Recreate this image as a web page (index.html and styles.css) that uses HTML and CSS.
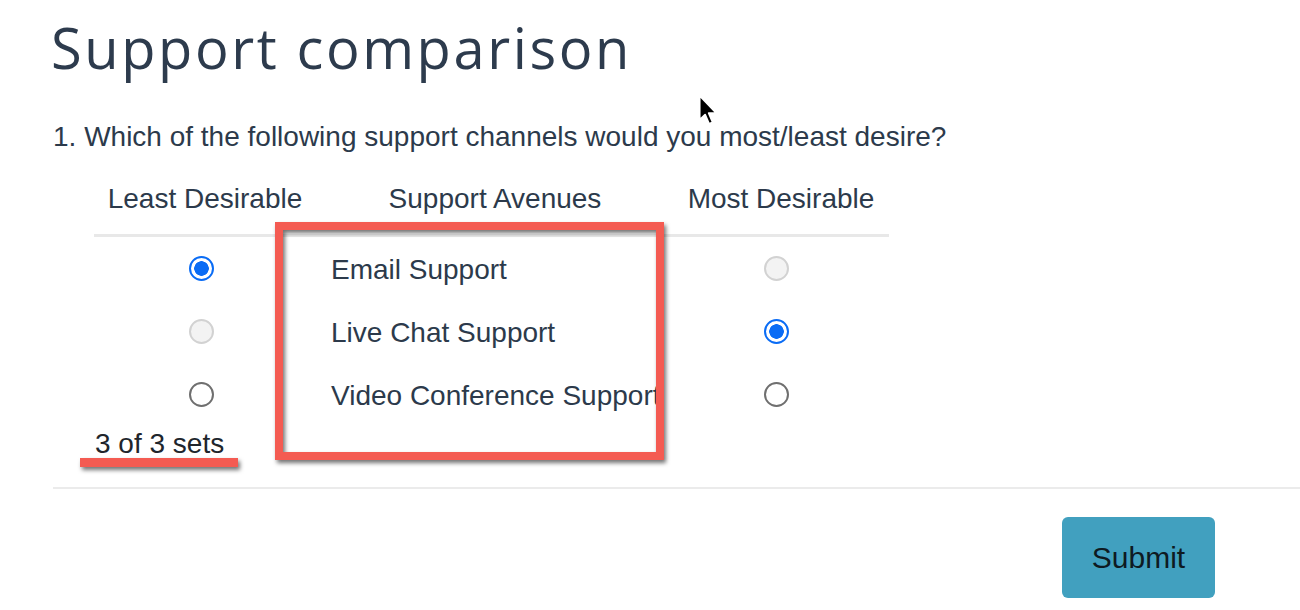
FILE: index.html
```html
<!DOCTYPE html>
<html>
    <head>
        <meta charset="utf-8">
        <title>Support comparison</title>
        <link rel="stylesheet" href="styles.css">
    </head>
    <body>
        <div class="page">
            <h1 class="survey-title">Support comparison</h1>

            <p class="question">1. Which of the following support channels would you most/least desire?</p>

            <table class="maxdiff">
                <colgroup>
                    <col class="w-least">
                    <col class="w-item">
                    <col class="w-most">
                </colgroup>
                <thead>
                    <tr>
                        <th class="col-least">Least Desirable</th>
                        <th class="col-item">Support Avenues</th>
                        <th class="col-most">Most Desirable</th>
                    </tr>
                </thead>
                <tbody>
                    <tr>
                        <td class="col-least"><span class="radio checked"></span></td>
                        <td class="col-item">Email Support</td>
                        <td class="col-most"><span class="radio disabled"></span></td>
                    </tr>
                    <tr>
                        <td class="col-least"><span class="radio disabled"></span></td>
                        <td class="col-item">Live Chat Support</td>
                        <td class="col-most"><span class="radio checked"></span></td>
                    </tr>
                    <tr>
                        <td class="col-least"><span class="radio"></span></td>
                        <td class="col-item">Video Conference Support</td>
                        <td class="col-most"><span class="radio"></span></td>
                    </tr>
                </tbody>
            </table>

            <div class="set-count">3 of 3 sets</div>

            <div class="footer">
                <button class="submit">Submit</button>
            </div>

            <!-- annotations drawn over the screenshot -->
            <div class="mark-box"></div>
            <div class="mark-line"></div>
            <svg class="cursor" width="20" height="32" viewBox="0 0 13 21">
                <path d="M1 1 L1 17 L4.6 13.6 L7.2 19.6 L9.6 18.6 L7 12.6 L12 12.6 Z" fill="#000" stroke="#fff" stroke-width="1.2" stroke-linejoin="round"/>
            </svg>
        </div>
    </body>
</html>
```

FILE: styles.css
```css
body {
    margin: 0; padding: 0;
    background: #FFFFFF;
    color: #2C3A4B;
    font-family: "Liberation Sans", Arial, sans-serif;
    overflow: hidden;
}

.page {
    position: relative;
    padding: 14px 0 0 53px;
    height: 596px;
}

.survey-title {
    font-family: "Open Sans", sans-serif;
    font-weight: 400;
    font-size: 56px;
    line-height: 66px;
    letter-spacing: 2.6px;
    margin: 0 0 0 -2px;
    color: #2D3B4D;
}

.question {
    font-size: 28px;
    line-height: 34px;
    margin: 40px 0 0 0;
}

.maxdiff {
    margin: 25px 0 0 41px;
    border-collapse: collapse;
    table-layout: fixed;
    width: 795px;
    font-size: 28px;
}
.w-least { width: 214px; }
.w-item { width: 374px; }
.w-most { width: 207px; }

.maxdiff th {
    font-weight: 400;
    height: 40px;
    padding: 0 0 15px 0;
    text-align: center;
    border-bottom: 3px solid #E8E8E8;
}
.maxdiff th.col-least { padding-left: 8px; }
.maxdiff th.col-most { padding-right: 9px; }

.maxdiff td {
    height: 63px;
    padding: 0;
}
.maxdiff td.col-item {
    height: 61px;
    padding: 2px 0 0 23px;
    white-space: nowrap;
}
.maxdiff td.col-most { padding-right: 19px; }

.radio {
    display: block;
    box-sizing: border-box;
    width: 25px; height: 25px;
    margin: 0 auto;
    border-radius: 50%;
    border: 2px solid #6F6F6F;
    background: #fff;
}
.radio.disabled {
    border-color: #D2D2D2;
    background: #F3F3F3;
}
.radio.checked {
    border: 2px solid #0A6CF5;
    background: radial-gradient(circle, #0A6CF5 0 7px, #fff 7.5px);
}

.set-count {
    font-size: 28px;
    line-height: 36px;
    color: #20252C;
    margin-left: 42px;
}

.footer {
    margin-top: 25px;
    border-top: 2px solid #EBEBEB;
    padding: 28px 85px 0 0;
    display: flex;
    justify-content: flex-end;
}

.submit {
    width: 153px;
    height: 81px;
    border: none;
    border-radius: 6px;
    background: #41A0BF;
    color: #0E1A22;
    font-family: "Liberation Sans", Arial, sans-serif;
    font-size: 30px;
}

.mark-box {
    position: absolute;
    left: 275px; top: 222px;
    width: 389px; height: 238px;
    box-sizing: border-box;
    border: 8px solid #F45B52;
    filter: drop-shadow(2px 3px 2px rgba(0, 0, 0, 0.55));
}

.mark-line {
    position: absolute;
    left: 80px; top: 458px;
    width: 158px; height: 9px;
    background: #F45B52;
    filter: drop-shadow(2px 3px 2px rgba(0, 0, 0, 0.55));
}

.cursor {
    position: absolute;
    left: 698px; top: 94px;
}
```
